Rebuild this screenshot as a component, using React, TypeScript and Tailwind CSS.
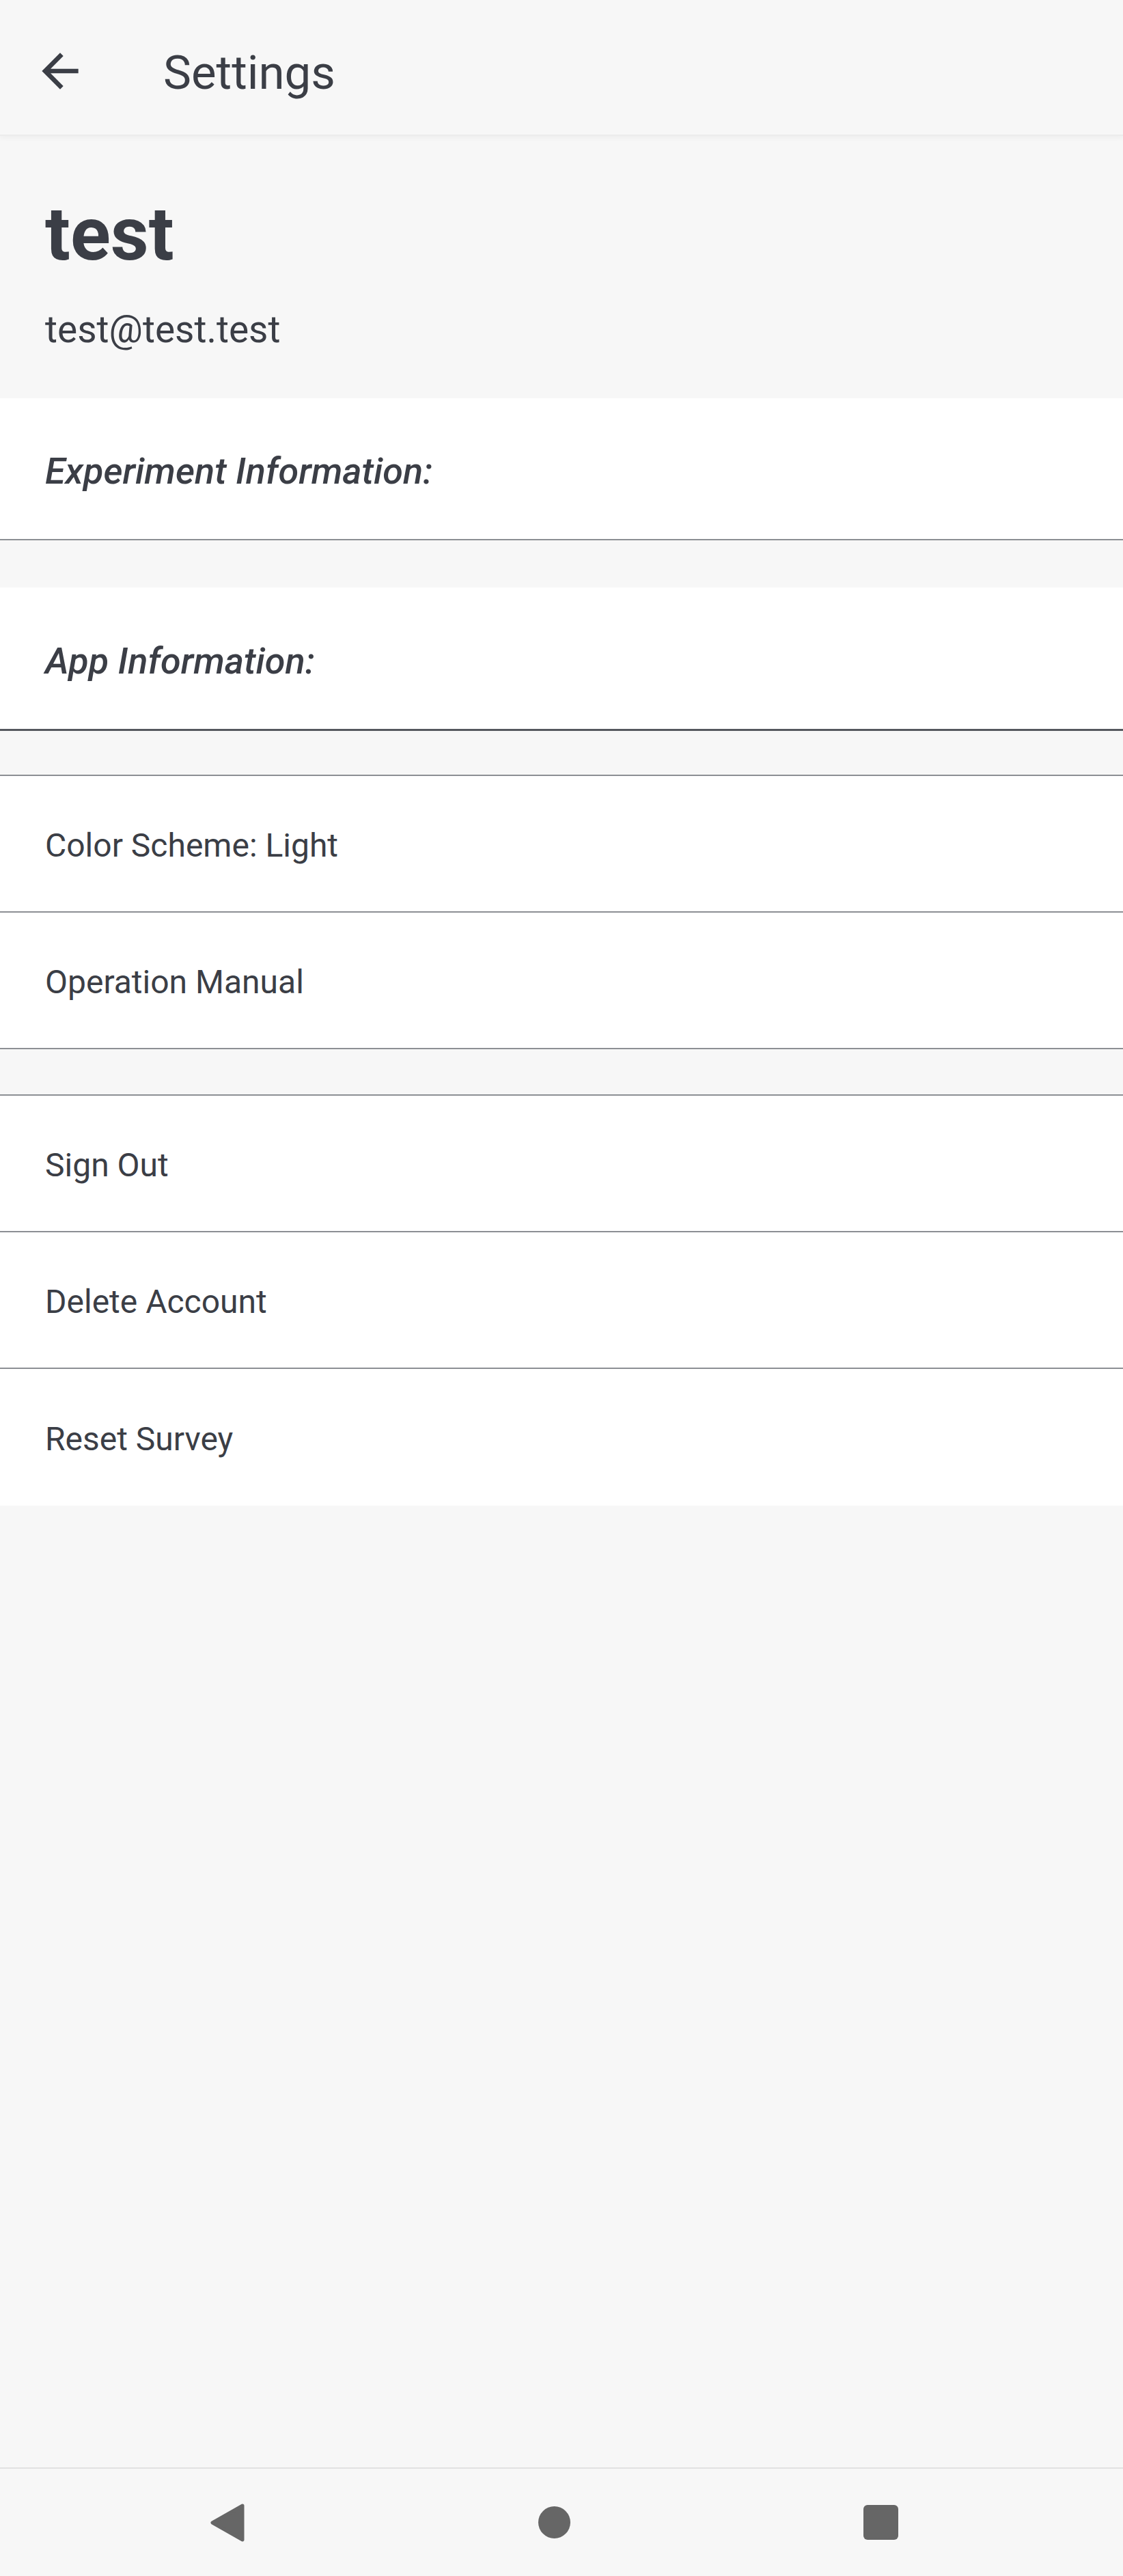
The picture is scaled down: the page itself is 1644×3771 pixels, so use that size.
import React from 'react';

const textColor = 'text-[#3b3e46]';

interface RowProps {
  label: string;
  last?: boolean;
}

const Row: React.FC<RowProps> = ({ label, last }) => (
  <div
    className={`flex h-[200px] items-center bg-white pl-[66px] pt-[6px] ${
      last ? '' : 'border-b-2 border-[#8c8f94]'
    }`}
  >
    <span className={`text-[48px] leading-none ${textColor}`}>{label}</span>
  </div>
);

const App: React.FC = () => {
  return (
    <div
      className="flex h-screen flex-col bg-[#f7f7f7]"
      style={{ fontFamily: 'Roboto, "Noto Sans", sans-serif' }}
    >
      {/* toolbar */}
      <div className="flex h-[199px] shrink-0 items-center border-b-2 border-[#ececec] bg-[#f7f7f7] pt-[10px] shadow-[0_3px_8px_rgba(0,0,0,0.04)]">
        <svg className="ml-[48px] h-[80px] w-[80px] text-[#3b3e46]" viewBox="0 0 24 24" fill="currentColor">
          <path d="M20 11H7.83l5.59-5.59L12 4l-8 8 8 8 1.41-1.41L7.83 13H20v-2z" />
        </svg>
        <span className={`ml-[111px] mt-[6px] text-[69px] leading-none ${textColor}`}>Settings</span>
      </div>

      {/* profile */}
      <div className="flex shrink-0 flex-col pl-[66px] pt-[90px] pb-[73px]">
        <span className={`text-[109px] font-bold leading-none ${textColor}`}>test</span>
        <span className={`mt-[57px] text-[55px] leading-none ${textColor}`}>test@test.test</span>
      </div>

      {/* info cards */}
      <div className="flex h-[208px] shrink-0 items-center border-b-2 border-[#8c8f94] bg-white pl-[66px] pt-[8px]">
        <span className={`text-[54px] font-medium italic leading-none ${textColor}`}>Experiment Information:</span>
      </div>
      <div className="mt-[69px] flex h-[210px] shrink-0 items-center border-b-[3px] border-[#55585e] bg-white pl-[66px] pt-[8px]">
        <span className={`text-[54px] font-medium italic leading-none ${textColor}`}>App Information:</span>
      </div>

      {/* preferences */}
      <div className="mt-[64px] shrink-0 border-t-2 border-[#8c8f94]">
        <Row label="Color Scheme: Light" />
        <Row label="Operation Manual" />
      </div>

      {/* account */}
      <div className="mt-[66px] shrink-0 border-t-2 border-[#8c8f94]">
        <Row label="Sign Out" />
        <Row label="Delete Account" />
        <Row label="Reset Survey" last />
      </div>

      <div className="flex-1" />

      {/* android nav bar */}
      <div className="flex h-[159px] shrink-0 items-center gap-[358px] border-t-2 border-[#e2e2e2] bg-[#f7f7f7] pl-[273px]">
        <div className="flex w-[120px] justify-center">
          <svg width="52" height="58" viewBox="0 0 52 58">
            <path d="M48 4 L4 29 L48 54 Z" fill="#666666" stroke="#666666" strokeWidth="5" strokeLinejoin="round" />
          </svg>
        </div>
        <div className="flex w-[120px] justify-center">
          <div className="h-[47px] w-[47px] rounded-full bg-[#666666]" />
        </div>
        <div className="flex w-[120px] justify-center">
          <div className="h-[51px] w-[51px] rounded-[6px] bg-[#666666]" />
        </div>
      </div>
    </div>
  );
};

export default App;
